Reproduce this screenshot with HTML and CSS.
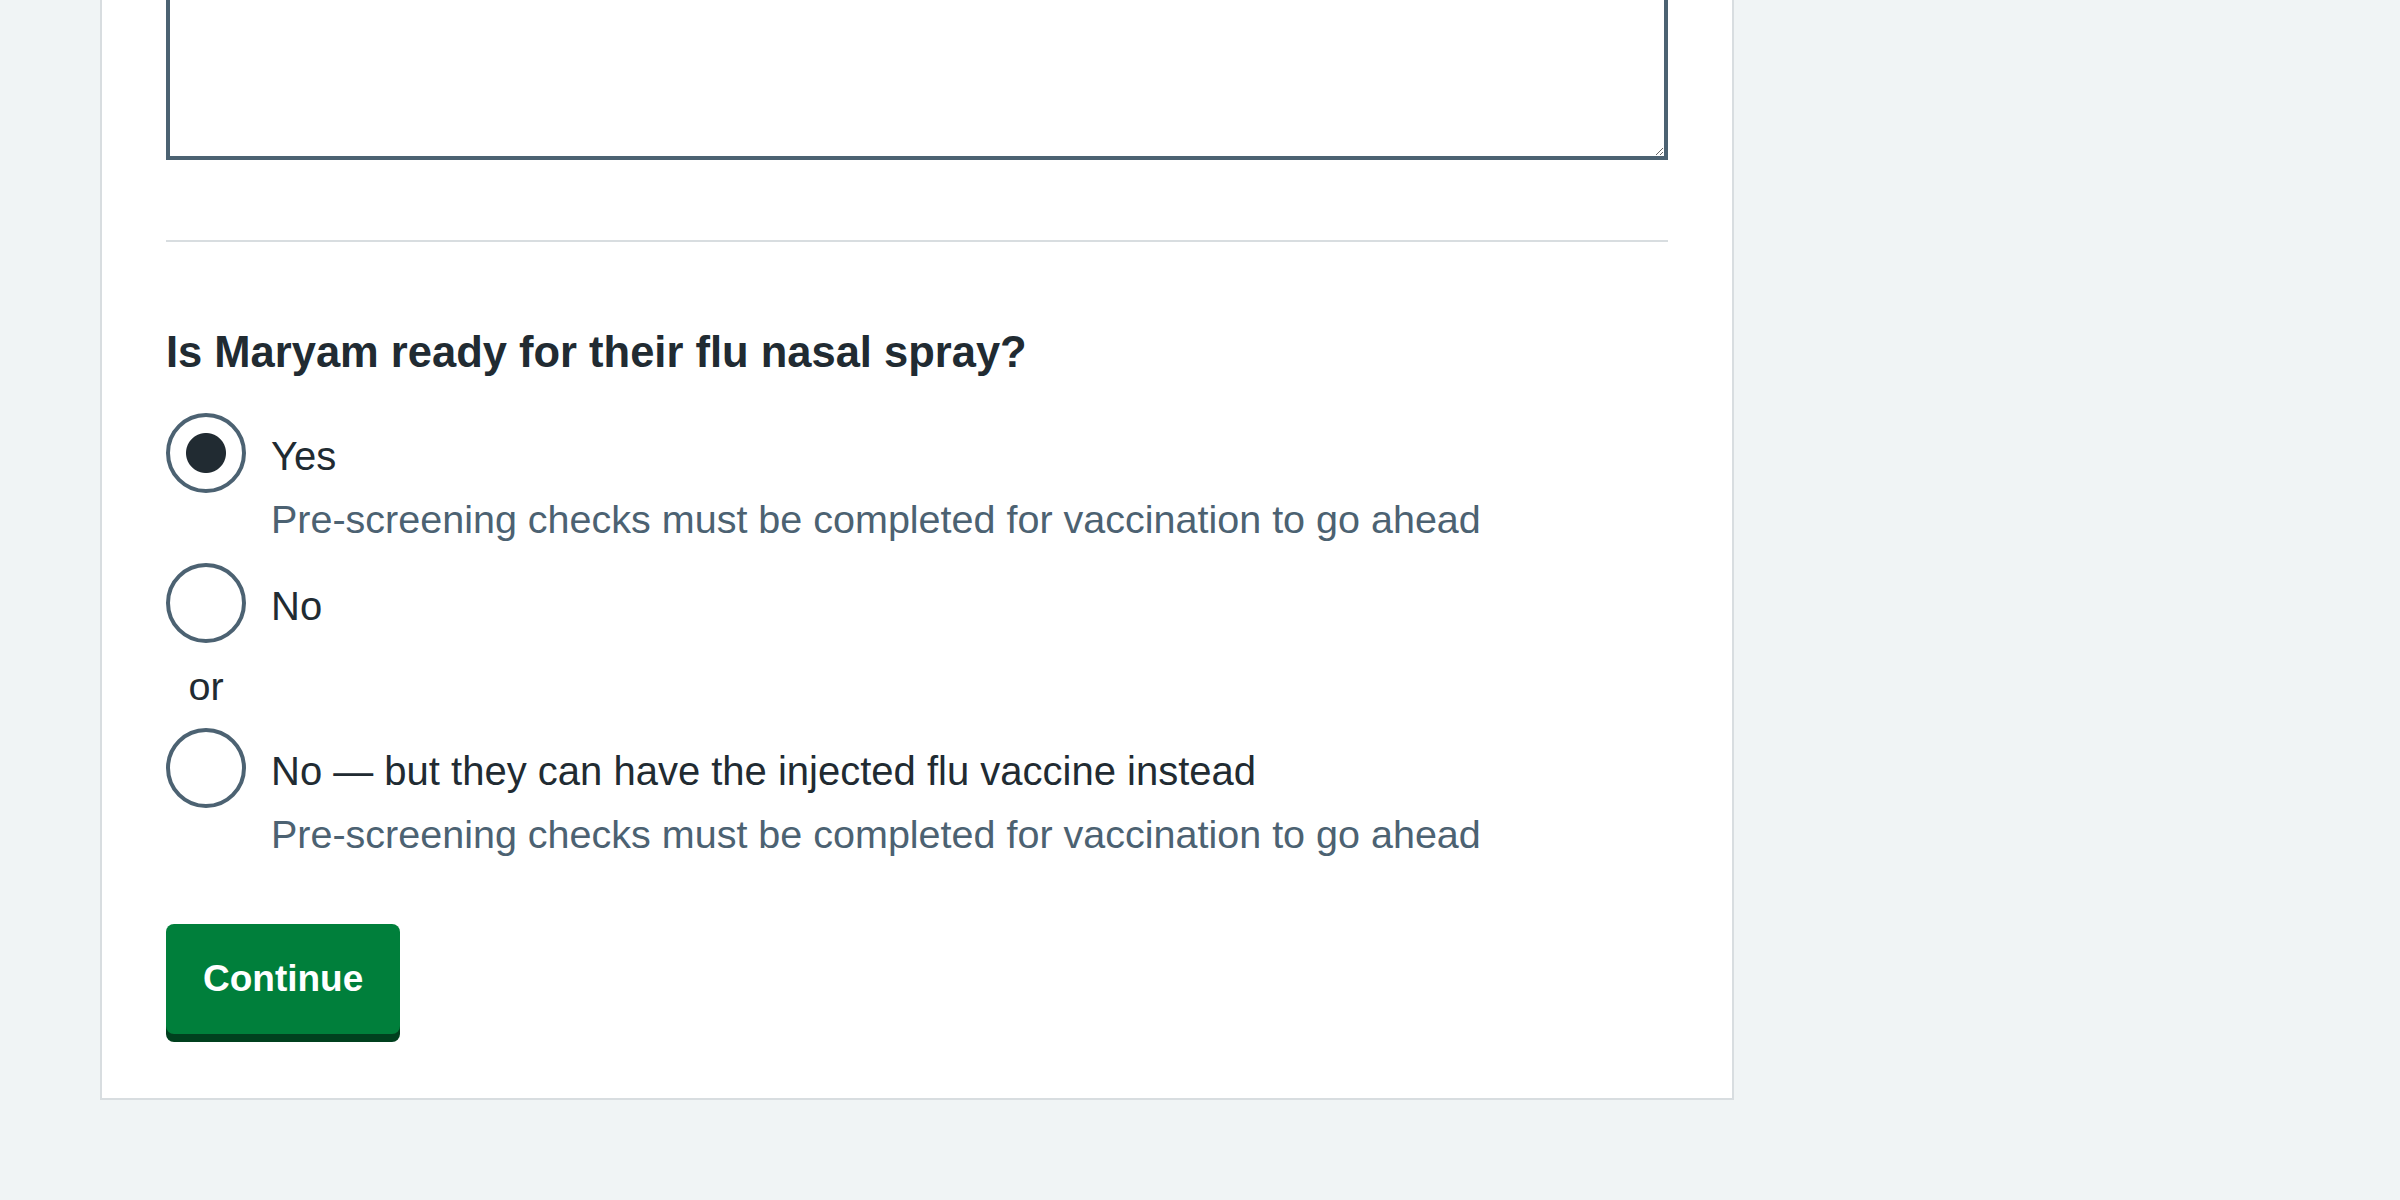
FILE: index.html
```html
<!DOCTYPE html>
<html lang="en">
<head>
<meta charset="utf-8">
<title>Pre-screening</title>
<link rel="stylesheet" href="styles.css">
</head>
<body>
<main class="page">
  <form class="card">
    <textarea class="textarea" aria-label="Notes"></textarea>
    <hr class="section-break">
    <fieldset class="fieldset">
      <legend class="legend">Is Maryam ready for their flu nasal spray?</legend>
      <div class="radios">
        <div class="radio-item">
          <input class="radio-input" type="radio" name="ready" id="r1" checked>
          <div class="radio-text">
            <label class="radio-label" for="r1">Yes</label>
            <div class="radio-hint">Pre-screening checks must be completed for vaccination to go ahead</div>
          </div>
        </div>
        <div class="radio-item">
          <input class="radio-input" type="radio" name="ready" id="r2">
          <div class="radio-text">
            <label class="radio-label" for="r2">No</label>
          </div>
        </div>
        <div class="radio-or">or</div>
        <div class="radio-item">
          <input class="radio-input" type="radio" name="ready" id="r3">
          <div class="radio-text">
            <label class="radio-label" for="r3">No — but they can have the injected flu vaccine instead</label>
            <div class="radio-hint">Pre-screening checks must be completed for vaccination to go ahead</div>
          </div>
        </div>
      </div>
    </fieldset>
    <button class="button" type="submit">Continue</button>
  </form>
</main>
</body>
</html>
```

FILE: styles.css
```css
html, body {
  margin: 0;
  padding: 0;
  background: #f0f4f5;
}

body {
  font-family: "Liberation Sans", Arial, sans-serif;
  color: #212b32;
  height: 1200px;
  overflow: hidden;
}

.page {
  margin-top: -206px;
  padding-left: 100px;
}

.card {
  box-sizing: border-box;
  width: 1634px;
  background: #ffffff;
  border: 2px solid #d8dde0;
  padding: 64px;
}

.textarea {
  display: block;
  box-sizing: border-box;
  width: 100%;
  height: 300px;
  margin: 0;
  border: 4px solid #4c6272;
  border-radius: 0;
  background: #fff;
  font: inherit;
  resize: vertical;
}

.section-break {
  margin: 80px 0 0;
  border: 0;
  border-top: 2px solid #d8dde0;
  height: 0;
}

.fieldset {
  margin: 0;
  padding: 0;
  border: 0;
  min-width: 0;
}

.legend {
  padding: 0;
  margin: 82px 0 33px;
  font-size: 43.5px;
  line-height: 56px;
  font-weight: 700;
  color: #212b32;
  float: left;
  width: 100%;
}

.radios {
  clear: both;
  display: flex;
  flex-direction: column;
}

.radio-item {
  display: flex;
  align-items: flex-start;
  margin-bottom: 16px;
}

.radio-item:last-child {
  margin-bottom: 0;
}

.radio-input {
  appearance: none;
  -webkit-appearance: none;
  box-sizing: border-box;
  flex: 0 0 80px;
  width: 80px;
  height: 80px;
  margin: 0 25px 0 0;
  border: 4px solid #4c6272;
  border-radius: 50%;
  background: #fff;
}

.radio-input:checked {
  background: radial-gradient(circle, #212b32 0 19.5px, #ffffff 20.5px);
}

.radio-text {
  display: flex;
  flex-direction: column;
  padding-top: 15px;
}

.radio-label {
  font-size: 40px;
  line-height: 56px;
  color: #212b32;
}

.radio-hint {
  margin-top: 7px;
  font-size: 39.5px;
  line-height: 56px;
  color: #4c6272;
}

.radio-or {
  width: 80px;
  text-align: center;
  font-size: 39.5px;
  line-height: 48px;
  margin-top: 3px;
  margin-bottom: 18px;
}

.button {
  display: inline-flex;
  align-items: center;
  box-sizing: border-box;
  height: 110px;
  margin-top: 62px;
  padding: 0 37px;
  border: 0;
  border-radius: 8px;
  background: #007f3b;
  box-shadow: 0 8px 0 #00401e;
  color: #ffffff;
  font-family: "Liberation Sans", Arial, sans-serif;
  font-size: 37px;
  font-weight: 700;
  vertical-align: top;
}
```
